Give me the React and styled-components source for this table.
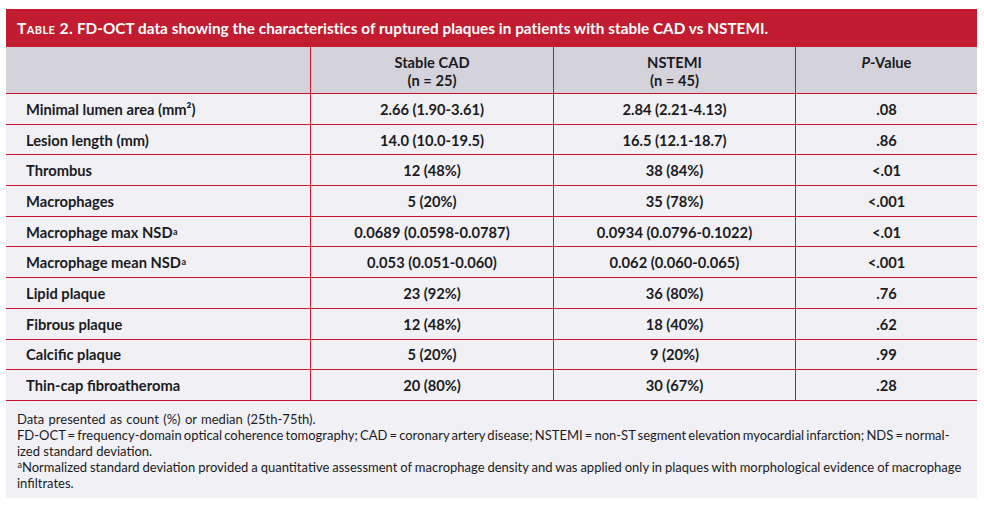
import React from "react";
import styled, { createGlobalStyle } from "styled-components";

const Global = createGlobalStyle`
  html, body { margin: 0; padding: 0; background: #ffffff; }
  body { font-family: Lato, "Open Sans", sans-serif; color: #1b1b1f; }
`;

const RED = "#c8142d";
const COLS = "305px 243px 242px 181px";

const Panel = styled.section`
  margin: 9px 7px 0 6px;
  width: 971px;
  background: #f1f1f5;
`;

const TitleBar = styled.h2`
  margin: 0;
  height: 38px;
  box-sizing: border-box;
  padding: 0 0 0 11px;
  display: flex;
  align-items: center;
  background: #c11c30;
  color: #ffffff;
  font-family: Lato, sans-serif;
  font-weight: 700;
  font-size: 15.25px;
  letter-spacing: 0.05px;
  white-space: pre;
`;

const Caps = styled.span`
  font-variant: small-caps;
  font-size: 15.7px;
  letter-spacing: 0.4px;
`;

const Row = styled.div`
  display: grid;
  grid-template-columns: ${COLS};
  height: ${(p) => (p.$head ? "47px" : "30.7px")};
  box-sizing: border-box;
  border-bottom: 1px solid ${RED};
  background: ${(p) => (p.$head ? "#d4d3dc" : "#f1f1f5")};
`;

const Cell = styled.div`
  display: flex;
  align-items: ${(p) => (p.$head ? "flex-start" : "center")};
  justify-content: ${(p) => (p.$label ? "flex-start" : "center")};
  padding: ${(p) => (p.$head ? "6px 0 0" : p.$label ? "0 0 0 20px" : "0")};
  border-right: ${(p) => (p.$last ? "none" : `1px solid ${RED}`)};
  font-weight: 700;
  font-size: 14.7px;
  line-height: ${(p) => (p.$head ? "18px" : "16px")};
  text-align: center;
  white-space: nowrap;
`;

const Sup = styled.sup`
  font-size: 9px;
  line-height: 0;
  vertical-align: 4px;
  margin-left: 0.5px;
`;

const Footer = styled.div`
  padding: 10px 0 0 11px;
  height: 97px;
  box-sizing: border-box;
  font-size: 13px;
  line-height: 16px;
  color: #1b1b1f;
  white-space: nowrap;
`;

const Note = styled.p`
  margin: 0;
  word-spacing: ${(p) => p.$ws || "0"};
`;

const rows = [
  ["Minimal lumen area (mm²)", "2.66 (1.90-3.61)", "2.84 (2.21-4.13)", ".08"],
  ["Lesion length (mm)", "14.0 (10.0-19.5)", "16.5 (12.1-18.7)", ".86"],
  ["Thrombus", "12 (48%)", "38 (84%)", "<.01"],
  ["Macrophages", "5 (20%)", "35 (78%)", "<.001"],
  [<>Macrophage max NSD<Sup>a</Sup></>, "0.0689 (0.0598-0.0787)", "0.0934 (0.0796-0.1022)", "<.01"],
  [<>Macrophage mean NSD<Sup>a</Sup></>, "0.053 (0.051-0.060)", "0.062 (0.060-0.065)", "<.001"],
  ["Lipid plaque", "23 (92%)", "36 (80%)", ".76"],
  ["Fibrous plaque", "12 (48%)", "18 (40%)", ".62"],
  ["Calcific plaque", "5 (20%)", "9 (20%)", ".99"],
  ["Thin-cap fibroatheroma", "20 (80%)", "30 (67%)", ".28"],
];

export default function App() {
  return (
    <>
      <Global />
      <Panel>
        <TitleBar>
          <Caps>Table 2.</Caps> FD-OCT data showing the characteristics of ruptured plaques in patients with stable CAD vs NSTEMI.
        </TitleBar>
        <Row $head>
          <Cell $head />
          <Cell $head>Stable CAD<br />(n = 25)</Cell>
          <Cell $head>NSTEMI<br />(n = 45)</Cell>
          <Cell $head $last><i>P</i>-Value</Cell>
        </Row>
        {rows.map((r, i) => (
          <Row key={i}>
            <Cell $label>{r[0]}</Cell>
            <Cell>{r[1]}</Cell>
            <Cell>{r[2]}</Cell>
            <Cell $last>{r[3]}</Cell>
          </Row>
        ))}
        <Footer>
          <Note $ws="1px">Data presented as count (%) or median (25th-75th).</Note>
          <Note $ws="-1.2px">
            FD-OCT = frequency-domain optical coherence tomography; CAD = coronary artery disease; NSTEMI = non-ST segment elevation myocardial infarction; NDS = normal-
          </Note>
          <Note>ized standard deviation.</Note>
          <Note $ws="-0.4px">
            <Sup>a</Sup>Normalized standard deviation provided a quantitative assessment of macrophage density and was applied only in plaques with morphological evidence of macrophage
          </Note>
          <Note>infiltrates.</Note>
        </Footer>
      </Panel>
    </>
  );
}
